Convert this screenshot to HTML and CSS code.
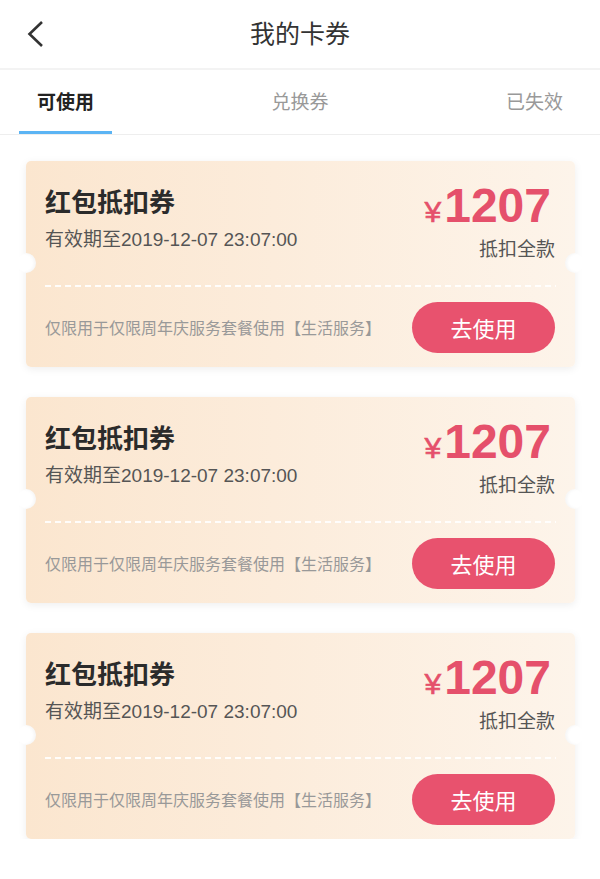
FILE: index.html
```html
<!DOCTYPE html>
<html lang="zh-CN">
<head>
<meta charset="utf-8">
<title>我的卡券</title>
<link rel="stylesheet" href="styles.css">
</head>
<body>
<header class="topbar">
  <div class="back">
    <svg width="18" height="28" viewBox="0 0 18 28"><polyline points="15,2 2.5,14 15,26" fill="none" stroke="#333" stroke-width="2.6"/></svg>
  </div>
  <h1 class="title">我的卡券</h1>
  <div></div>
</header>
<nav class="tabs">
  <div class="tab active">可使用</div>
  <div class="tab">兑换券</div>
  <div class="tab">已失效</div>
</nav>
<main class="list">
  <section class="card">
    <div class="card-top">
      <div class="info">
        <div class="name">红包抵扣券</div>
        <div class="date">有效期至2019-12-07 23:07:00</div>
      </div>
      <div class="price">
        <div class="amount"><span class="yen">¥</span>1207</div>
        <div class="desc">抵扣全款</div>
      </div>
    </div>
    <div class="dash"></div>
    <div class="card-bottom">
      <div class="limit">仅限用于仅限周年庆服务套餐使用【生活服务】</div>
      <div class="btn">去使用</div>
    </div>
  </section>
  <section class="card">
    <div class="card-top">
      <div class="info">
        <div class="name">红包抵扣券</div>
        <div class="date">有效期至2019-12-07 23:07:00</div>
      </div>
      <div class="price">
        <div class="amount"><span class="yen">¥</span>1207</div>
        <div class="desc">抵扣全款</div>
      </div>
    </div>
    <div class="dash"></div>
    <div class="card-bottom">
      <div class="limit">仅限用于仅限周年庆服务套餐使用【生活服务】</div>
      <div class="btn">去使用</div>
    </div>
  </section>
  <section class="card">
    <div class="card-top">
      <div class="info">
        <div class="name">红包抵扣券</div>
        <div class="date">有效期至2019-12-07 23:07:00</div>
      </div>
      <div class="price">
        <div class="amount"><span class="yen">¥</span>1207</div>
        <div class="desc">抵扣全款</div>
      </div>
    </div>
    <div class="dash"></div>
    <div class="card-bottom">
      <div class="limit">仅限用于仅限周年庆服务套餐使用【生活服务】</div>
      <div class="btn">去使用</div>
    </div>
  </section>
</main>
</body>
</html>
```

FILE: styles.css
```css
* { box-sizing: border-box; }
html, body { margin: 0; padding: 0; background: #fff; }
body {
  font-family: "Liberation Sans", "Noto Sans CJK SC", sans-serif;
  color: #333;
  width: 600px;
}
.topbar {
  height: 70px;
  display: grid;
  grid-template-columns: 1fr auto 1fr;
  align-items: center;
  border-bottom: 2px solid #f3f3f3;
}
.back { padding-left: 27px; display: flex; align-items: center; }
.back svg { display: block; }
.title {
  margin: 0;
  font-size: 25px;
  font-weight: normal;
  color: #333;
  line-height: 30px;
}
.tabs {
  height: 65px;
  display: flex;
  justify-content: space-between;
  padding: 0 19px;
  border-bottom: 1px solid #eeeeee;
}
.tab {
  padding: 0 18px;
  font-size: 19px;
  color: #999;
  display: flex;
  align-items: center;
  border-bottom: 3px solid transparent;
}
.tab.active { color: #222; font-weight: bold; border-bottom-color: #5bb4f4; }
.list {
  padding: 26px 25px 0 26px;
  display: flex;
  flex-direction: column;
  gap: 30px;
}
.card {
  position: relative;
  height: 206px;
  border-radius: 5px;
  background: linear-gradient(90deg, #fbe6cf 0%, #fcecdb 45%, #fdf4ea 100%);
  box-shadow: 0 2px 8px rgba(0, 0, 0, 0.07);
  display: flex;
  flex-direction: column;
}
.card::before, .card::after {
  content: "";
  position: absolute;
  top: 92px;
  width: 20px;
  height: 20px;
  border-radius: 50%;
  background: #fff;
}
.card::before { left: -10px; box-shadow: inset -2px 0 3px rgba(0,0,0,0.04); }
.card::after { right: -10px; box-shadow: inset 2px 0 3px rgba(0,0,0,0.04); }
.card-top {
  height: 124px;
  display: flex;
  justify-content: space-between;
  align-items: flex-start;
  padding: 20px 20px 0 19px;
}
.info { padding-top: 7px; }
.name {
  font-size: 26px;
  line-height: 30px;
  font-weight: bold;
  color: #2b2b2b;
}
.date {
  margin-top: 10px;
  font-size: 19px;
  line-height: 24px;
  color: #555;
}
.price { text-align: right; }
.amount {
  font-size: 48px;
  line-height: 50px;
  font-weight: bold;
  color: #e5506b;
  margin-right: 4px;
}
.yen {
  font-size: 30px;
  font-weight: normal;
  -webkit-text-stroke: 0.6px #e5506b;
  margin-right: 3px;
}
.desc {
  margin-top: 1px;
  font-size: 19px;
  line-height: 24px;
  color: #555;
}
.dash {
  height: 2px;
  margin: 0 19px;
  background: repeating-linear-gradient(90deg, rgba(255,255,255,0.9) 0 6px, transparent 6px 10px);
}
.card-bottom {
  flex: 1;
  display: flex;
  justify-content: space-between;
  align-items: center;
  padding: 0 20px 0 19px;
}
.limit { font-size: 16px; color: #999; }
.btn {
  width: 143px;
  height: 51px;
  border-radius: 26px;
  background: #e8526e;
  color: #fff;
  font-size: 22px;
  display: flex;
  align-items: center;
  justify-content: center;
}
```
